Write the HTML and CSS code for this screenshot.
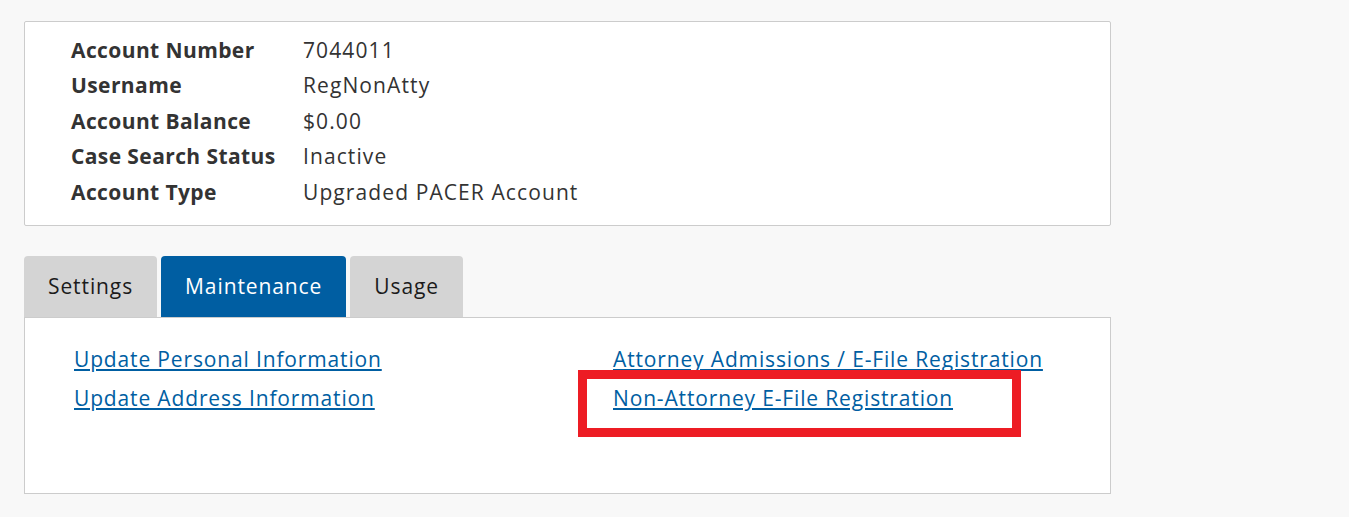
FILE: index.html
```html
<!DOCTYPE html>
<html>
  <head>
    <title>Manage My Account</title>
    <meta name="viewport" content="width=device-width, initial-scale=1" />
    <link rel="stylesheet" href="styles.css">
  </head>
  <body>
    <div class="page">
      <div class="summary">
        <table class="summary-table">
          <tr><th>Account Number</th><td>7044011</td></tr>
          <tr><th>Username</th><td>RegNonAtty</td></tr>
          <tr><th>Account Balance</th><td>$0.00</td></tr>
          <tr><th>Case Search Status</th><td>Inactive</td></tr>
          <tr><th>Account Type</th><td>Upgraded PACER Account</td></tr>
        </table>
      </div>

      <div class="tabs">
        <a class="tab">Settings</a>
        <a class="tab active">Maintenance</a>
        <a class="tab">Usage</a>
      </div>
      <div class="panel">
        <div class="links">
          <div class="cell"><a href="#">Update Personal Information</a></div>
          <div class="cell"><a href="#">Attorney Admissions / E-File Registration</a></div>
          <div class="cell"><a href="#">Update Address Information</a></div>
          <div class="cell highlight"><a href="#">Non-Attorney E-File Registration</a></div>
        </div>
      </div>
    </div>
  </body>
</html>
```

FILE: styles.css
```css
* {
  padding: 0;
  margin: 0;
  box-sizing: border-box;
  font-family: "Open Sans", "Liberation Sans", sans-serif;
}
body {
  background-color: #f8f8f8;
  color: #333333;
}
.page {
  width: 1087px;
  margin: 21px 0 0 24px;
}
.summary {
  background-color: #ffffff;
  border: 1px solid #cccccc;
  border-radius: 2px;
  padding: 10px 0 15px 46px;
  height: 205px;
}
.summary-table {
  border-collapse: collapse;
  font-size: 21px;
}
.summary-table th {
  text-align: left;
  font-weight: 700;
  letter-spacing: 0.4px;
  width: 232px;
  height: 35.5px;
  padding: 0;
}
.summary-table td {
  padding: 0;
  letter-spacing: 1.1px;
}
.tabs {
  display: flex;
  gap: 4px;
  margin-top: 30px;
}
.tab {
  display: block;
  height: 61px;
  line-height: 61px;
  padding: 0 24px;
  font-size: 21px;
  letter-spacing: 0.9px;
  color: #1b1b1b;
  background-color: #d4d4d4;
  border-radius: 4px 4px 0 0;
}
.tab.active {
  background-color: #005ea2;
  color: #ffffff;
}
.panel {
  background-color: #ffffff;
  border: 1px solid #cccccc;
  height: 177px;
  padding: 22px 0 0 49px;
}
.links {
  display: grid;
  grid-template-columns: 539px 1fr;
}
.cell {
  position: relative;
  line-height: 39px;
  font-size: 21px;
  letter-spacing: 0.85px;
}
.cell a {
  color: #005ea2;
}
.highlight::after {
  content: "";
  box-sizing: border-box;
  position: absolute;
  left: -35px;
  top: -9px;
  width: 443px;
  height: 67px;
  border: 9px solid #ed1c24;
}
```
